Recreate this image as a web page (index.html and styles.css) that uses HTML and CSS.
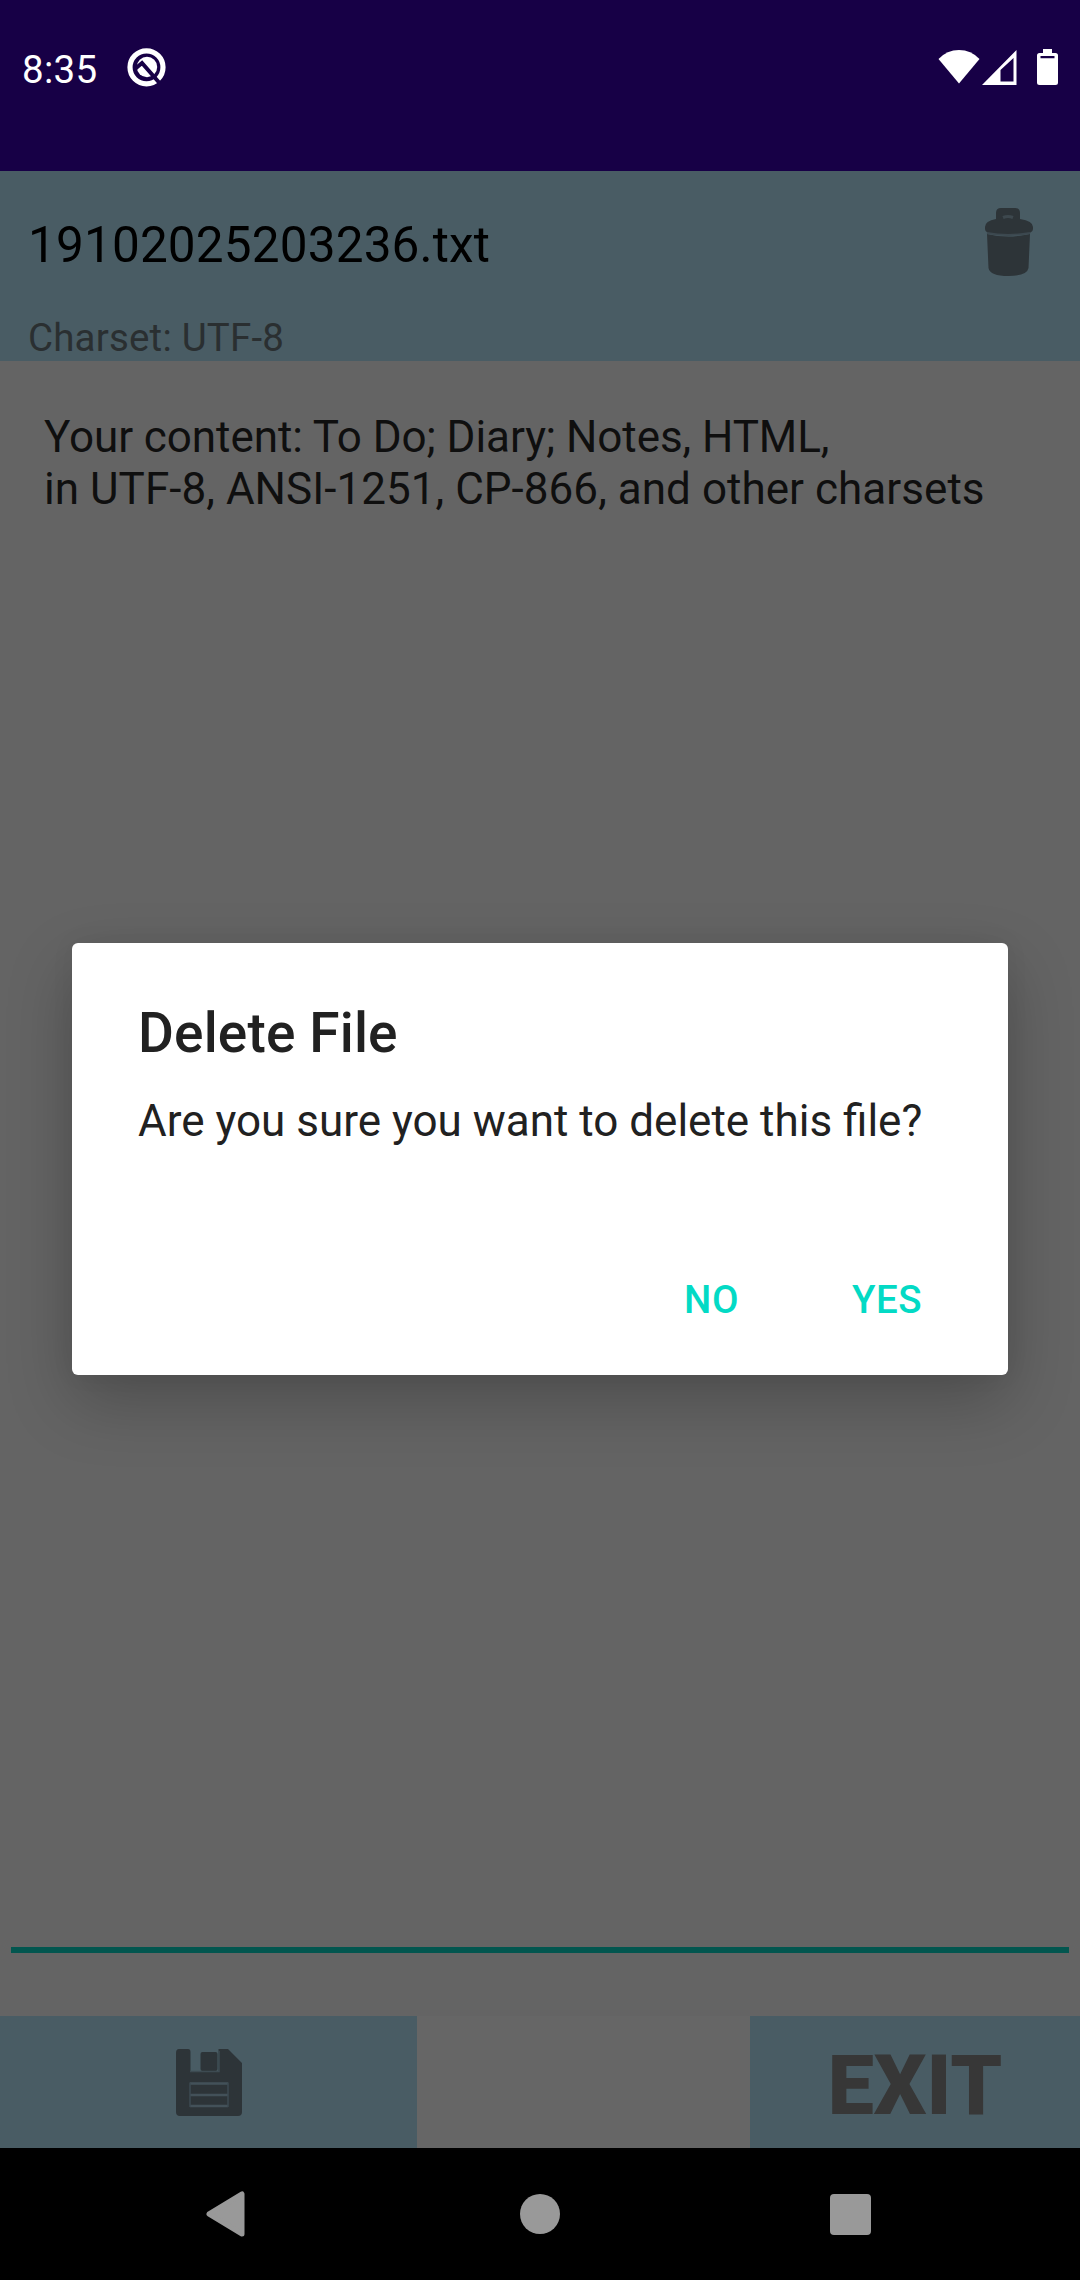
FILE: index.html
```html
<!DOCTYPE html>
<html lang="en">
<head>
<meta charset="utf-8">
<title>Delete File</title>
<link rel="stylesheet" href="styles.css">
</head>
<body>
<div class="screen">
  <div class="status-bar">
    <span class="clock">8:35</span>
    <svg class="notification" width="39" height="39" viewBox="0 0 39 39">
      <circle cx="19.500" cy="19.300" r="16.500" fill="none" stroke="#fff" stroke-width="5.200"/>
      <circle cx="20" cy="19" r="10.200" fill="#fff"/>
      <path d="M8.500 20.500L15 15L32.500 35" fill="none" stroke="#170046" stroke-width="4"/>
    </svg>
    <div class="system-icons">
      <svg width="42" height="35" viewBox="0 0 42 35"><path d="M0.5 10Q9 1 21 1T41.5 10L21 34.5Z" fill="#fff"/></svg>
      <svg class="signal" width="35" height="35" viewBox="0 0 35 35"><path fill-rule="evenodd" d="M0 35L34.5 0V35ZM18.500 20V31.500H31.500V8Z" fill="#fff"/></svg>
      <svg class="battery" width="21" height="36" viewBox="0 0 21 36"><path fill-rule="evenodd" d="M6 0H15V4H18.5Q21 4 21 6.500V33.500Q21 36 18.500 36H2.500Q0 36 0 33.500V6.500Q0 4 2.500 4H6ZM3.500 7V9.300H17.500V7Z" fill="#fff"/></svg>
    </div>
  </div>
  <div class="file-header">
    <div class="file-info">
      <div class="file-name">19102025203236.txt</div>
      <div class="file-charset">Charset: UTF-8</div>
    </div>
    <svg class="trash" width="50" height="68" viewBox="0 0 50 68">
      <path d="M12 11V5Q12 0 17 0H31Q36 0 36 5V11Q49 13 49 19V21Q49 25 41 26Q25 28 9 26Q1 25 1 21V19Q1 13 12 11Z" fill="#2d3438"/>
      <path d="M19 9.500Q24 7.500 29 9.500" fill="none" stroke="#3d484e" stroke-width="3"/>
      <path d="M3 26Q24 31 46 26L44.500 60Q43 68 24.500 68T4.500 60Z" fill="#2d3438"/>
      <path d="M3 25Q24 29 46 25" fill="none" stroke="#3c484f" stroke-width="2"/>
    </svg>
  </div>
  <div class="editor">
    <div class="content">
      <div class="line-tight">Your content: To Do; Diary; Notes, HTML,</div>
      <div class="line-loose">in UTF-8, ANSI-1251, CP-866, and other charsets</div>
    </div>
  </div>
  <div class="action-bar">
    <div class="save">
      <svg width="66" height="67" viewBox="0 0 66 67">
        <path d="M3 0H12Q14.500 0 14.500 3V22H42.500V0H52L66 14V63Q66 67 62 67H4Q0 67 0 63V4Q0 0 3 0Z" fill="#2d3438"/>
        <rect x="24.500" y="3" width="17" height="19" rx="2" fill="#2d3438"/>
        <path d="M14 22.500H43V2" fill="none" stroke="#3d4b52" stroke-width="1.500"/>
        <path d="M14 34.500H52M14 46H52M14 57H52" stroke="#435159" stroke-width="2.600"/>
        <path d="M14 33.500V58M52 33.500V58" stroke="#3d4a51" stroke-width="1.500"/>
      </svg>
    </div>
    <div class="exit">EXIT</div>
  </div>
  <div class="nav-bar">
    <svg width="40" height="46" viewBox="0 0 40 46"><path d="M37 3V43L4 23Z" fill="#999" stroke="#999" stroke-width="5" stroke-linejoin="round"/></svg>
    <svg width="46" height="42" viewBox="0 0 46 42"><circle cx="25" cy="21" r="20" fill="#999"/></svg>
    <svg width="41" height="41" viewBox="0 0 41 41"><rect width="41" height="41" rx="4" fill="#999"/></svg>
  </div>
  <div class="dialog">
    <div class="dialog-title">Delete File</div>
    <div class="dialog-message">Are you sure you want to delete this file?</div>
    <div class="dialog-actions"><span>NO</span><span>YES</span></div>
  </div>
</div>
</body>
</html>
```
FILE: styles.css
```css
* { box-sizing: border-box; }
body { margin: 0; font-family: Roboto, sans-serif; }
svg { display: block; flex: none; }
.screen {
  position: relative;
  display: flex;
  flex-direction: column;
  width: 1080px;
  height: 2280px;
  overflow: hidden;
  background: #646464;
}
.status-bar {
  display: flex;
  align-items: flex-start;
  height: 171px;
  padding: 47px 22px 0;
  background: #170046;
  color: #fff;
}
.clock { width: 105px; font-size: 38.5px; line-height: 46px; letter-spacing: .3px; }
.system-icons { display: flex; align-items: flex-start; margin: 2px 0 0 auto; }
.notification { margin-top: 1px; }
.signal { margin: 1px 0 0 2px; }
.battery { margin-left: 20px; }
.file-header {
  display: flex;
  justify-content: space-between;
  height: 190px;
  padding: 37px 46px 0 28px;
  background: #495c64;
}
.file-info { display: flex; flex-direction: column; gap: 41px; padding-top: 8px; }
.file-name { font-size: 49.5px; line-height: 58px; letter-spacing: .15px; color: #000; }
.file-charset { font-size: 38.5px; line-height: 46px; letter-spacing: .18px; color: #2a2f31; }
.editor {
  flex: 1;
  margin: 0 11px 63px;
  padding: 50px 33px 0;
  border-bottom: 6px solid #02564f;
}
.content { font-size: 44px; line-height: 52px; color: #0f0f0f; white-space: nowrap; }
.line-tight { letter-spacing: -.07px; }
.line-loose { letter-spacing: .04px; }
.action-bar { display: flex; justify-content: space-between; height: 132px; background: #666; }
.save, .exit { display: flex; align-items: center; justify-content: center; background: #495c64; }
.save { width: 417px; }
.exit {
  width: 330px;
  padding-top: 6px;
  font-size: 82.5px;
  font-weight: 900;
  color: #373737;
}
.nav-bar {
  display: flex;
  align-items: center;
  justify-content: space-between;
  height: 132px;
  padding: 0 209px 0 205px;
  background: #000;
}
.dialog {
  position: absolute;
  left: 72px;
  top: 943px;
  width: 936px;
  height: 432px;
  padding: 58px 86px 0 66px;
  border-radius: 6px;
  background: #fff;
  box-shadow: 0 26px 66px rgba(0, 0, 0, .23), 0 0 24px rgba(0, 0, 0, .05);
  color: #212121;
}
.dialog-title { font-size: 55px; font-weight: 500; line-height: 64px; letter-spacing: .15px; }
.dialog-message { margin-top: 30px; font-size: 44px; line-height: 52px; white-space: nowrap; }
.dialog-actions {
  display: flex;
  justify-content: flex-end;
  gap: 113px;
  margin-top: 130px;
  font-size: 38.5px;
  font-weight: 500;
  line-height: 46px;
  letter-spacing: .5px;
  color: #03dac5;
}
```
